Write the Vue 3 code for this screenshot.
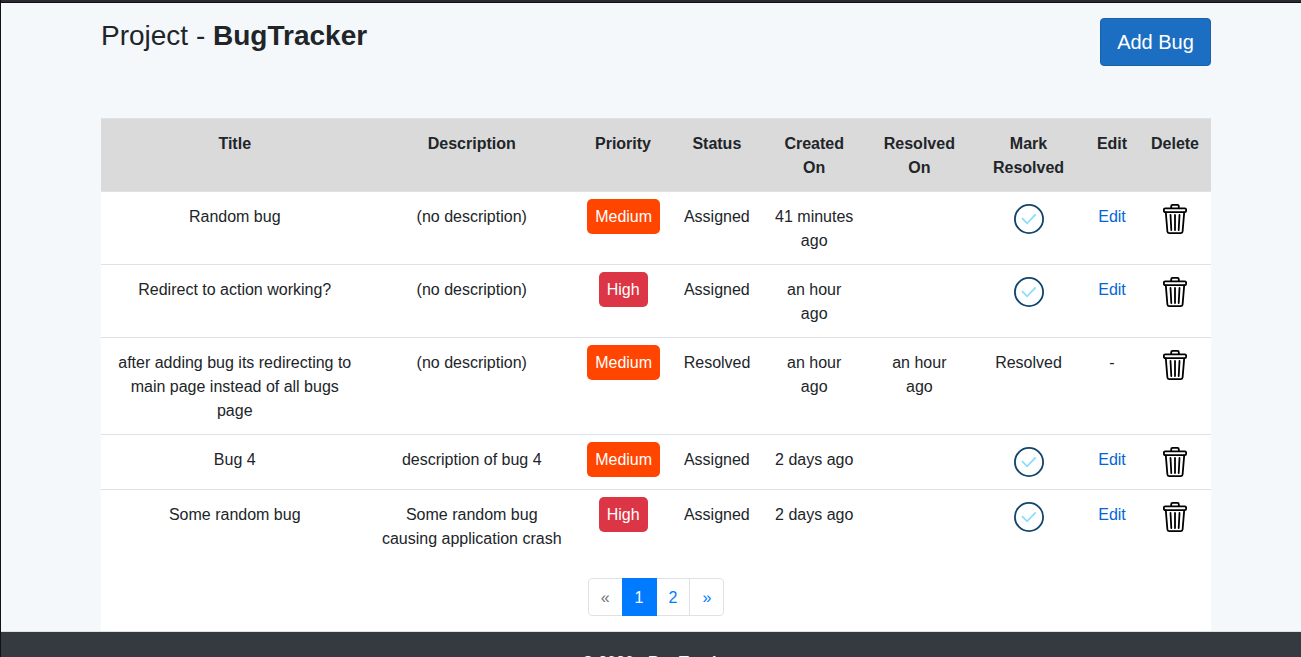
<script setup>
const columns = [
  { label: 'Title', width: 268 },
  { label: 'Description', width: 206 },
  { label: 'Priority', width: 96 },
  { label: 'Status', width: 91 },
  { label: 'Created On', width: 104 },
  { label: 'Resolved On', width: 106 },
  { label: 'Mark Resolved', width: 113 },
  { label: 'Edit', width: 54 },
  { label: 'Delete', width: 72 },
]
const bugs = [
  { title: 'Random bug', description: '(no description)', priority: 'Medium', status: 'Assigned', created: '41 minutes ago', resolved: '' },
  { title: 'Redirect to action working?', description: '(no description)', priority: 'High', status: 'Assigned', created: 'an hour ago', resolved: '' },
  { title: 'after adding bug its redirecting to main page instead of all bugs page', description: '(no description)', priority: 'Medium', status: 'Resolved', created: 'an hour ago', resolved: 'an hour ago' },
  { title: 'Bug 4', description: 'description of bug 4', priority: 'Medium', status: 'Assigned', created: '2 days ago', resolved: '' },
  { title: 'Some random bug', description: 'Some random bug causing application crash', priority: 'High', status: 'Assigned', created: '2 days ago', resolved: '' },
]
</script>

<template>
  <div class="page">
    <main class="container">
      <header class="heading">
        <h1>Project - <b>BugTracker</b></h1>
        <button class="add">Add Bug</button>
      </header>
      <section class="panel">
        <table>
          <colgroup>
            <col v-for="c in columns" :key="c.label" :style="{ width: c.width + 'px' }" />
          </colgroup>
          <thead>
            <tr><th v-for="c in columns" :key="c.label">{{ c.label }}</th></tr>
          </thead>
          <tbody>
            <tr v-for="bug in bugs" :key="bug.title">
              <td>{{ bug.title }}</td>
              <td>{{ bug.description }}</td>
              <td><span class="badge" :class="bug.priority.toLowerCase()">{{ bug.priority }}</span></td>
              <td>{{ bug.status }}</td>
              <td>{{ bug.created }}</td>
              <td>{{ bug.resolved }}</td>
              <td>
                <template v-if="bug.resolved">Resolved</template>
                <svg v-else class="icon" viewBox="0 0 30 30" fill="none">
                  <circle cx="15" cy="15" r="14.1" stroke="#10456f" stroke-width="1.8" />
                  <path d="M8 14.2l5.1 5.1 8.6-8.9" stroke="#8bdcff" stroke-width="1.8" />
                </svg>
              </td>
              <td>
                <template v-if="bug.resolved">-</template>
                <a v-else href="#">Edit</a>
              </td>
              <td>
                <svg class="icon" viewBox="0 0 30 30" fill="none" stroke="#000" stroke-width="1.8" stroke-linecap="round" stroke-linejoin="round">
                  <path d="M11.2 4V2.2q0-1.3 1.3-1.3h5q1.3 0 1.3 1.3V4" />
                  <rect x="3.9" y="4.4" width="22.2" height="3.7" rx="1.2" />
                  <path d="M5.8 8.4l1.6 19.1q.1 1.6 1.7 1.6h11.8q1.6 0 1.7-1.6l1.6-19.1M10.5 11l.8 15M15 11v15M19.5 11l-.8 15" />
                </svg>
              </td>
            </tr>
          </tbody>
        </table>
        <nav class="pagination">
          <span class="disabled">«</span>
          <span class="active">1</span>
          <a href="#">2</a>
          <a href="#">»</a>
        </nav>
      </section>
    </main>
    <footer>© 2020 - BugTracker</footer>
  </div>
</template>

<style>
body { margin: 0; overflow: hidden; }
</style>

<style scoped>
* { box-sizing: border-box; }
.page {
  height: 657px;
  overflow: hidden;
  display: flex;
  flex-direction: column;
  border-left: 1px solid #111216;
  background: linear-gradient(#2b2933 0 2px, #101014 2px 3px, #f4f8fb 3px);
  font: 16px/24px "Liberation Sans", Arial, sans-serif;
  color: #212529;
}
.container {
  width: 1110px;
  height: 631px;
  flex: none;
  margin-left: 100px;
  display: flex;
  flex-direction: column;
}
.heading {
  height: 118px;
  flex: none;
  padding-top: 18px;
  display: flex;
  justify-content: space-between;
  align-items: flex-start;
}
h1 { margin: 1px 0 0; font-size: 28px; line-height: 34px; font-weight: 400; }
.add {
  width: 111px;
  height: 48px;
  padding: 0;
  border: 1px solid #1861ac;
  border-radius: 4px;
  background: #1b6ec2;
  color: #fff;
  font: 20px/30px "Liberation Sans", Arial, sans-serif;
}
.panel { background: #fff; flex: 1; }
table { width: 1110px; table-layout: fixed; border-collapse: separate; border-spacing: 0; text-align: center; }
th, td { padding: 13px 12px 11px; border-top: 1px solid #dee2e6; vertical-align: top; }
th { background: #dadada; font-weight: 700; }
td:nth-child(-n+2), th:nth-child(-n+2) { padding-left: 11.5px; }
td:nth-child(4), th:nth-child(4), td:nth-child(6), th:nth-child(6) { padding-left: 12.7px; }
td:nth-child(5), th:nth-child(5) { padding-right: 11.6px; }
td:nth-child(3) { padding-left: 12.2px; }
td:nth-child(n+7), th:nth-child(n+7) { padding-left: 6px; padding-right: 6px; }
.icon { width: 30px; height: 30px; display: block; margin: -1px auto 1px; }
.badge { padding: 9px 8px; border-radius: 5px; color: #fff; }
.medium { background: #ff4500; }
.high { background: #dc3545; }
a { color: #0366d6; text-decoration: none; }
.pagination { display: flex; justify-content: center; margin-top: 16px; }
.pagination > * {
  padding: 9px 12px 7px;
  margin-left: -1px;
  border: 1px solid #dee2e6;
  line-height: 20px;
  color: #007bff;
}
.pagination > :first-child { margin-left: 0; border-radius: 4px 0 0 4px; }
.pagination > :last-child { border-radius: 0 4px 4px 0; }
.pagination .disabled { color: #6c757d; }
.pagination .active { position: relative; background: #007bff; border-color: #007bff; color: #fff; }
footer {
  height: 70px;
  flex: none;
  padding: 19px 0 0 16px;
  border-top: 1px solid #dee2e6;
  background: #343a40;
  color: #fff;
  font-weight: 700;
  text-align: center;
}
</style>
